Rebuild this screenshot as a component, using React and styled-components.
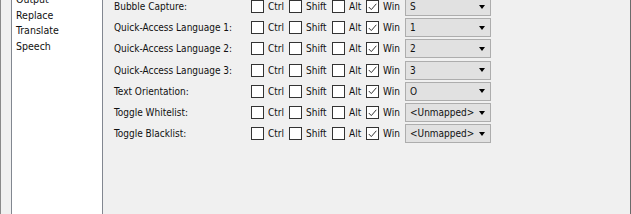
import React from 'react';
import styled, { createGlobalStyle } from 'styled-components';

const GlobalStyle = createGlobalStyle`
  html, body {
    margin: 0;
    padding: 0;
    background: #f0f0f0;
  }
  * {
    box-sizing: border-box;
  }
`;

const Window = styled.div`
  display: flex;
  width: 631px;
  height: 214px;
  overflow: hidden;
  background: #f0f0f0;
  border-left: 1px solid #8a8a8a;
  border-right: 1px solid #6b6b6b;
  font-family: 'DejaVu Sans Condensed', 'DejaVu Sans', sans-serif;
  font-size: 10px;
  color: #111;
`;

const Sidebar = styled.ul`
  list-style: none;
  margin: -9px 0 -20px 10px;
  padding: 0 0 0 4px;
  width: 92px;
  flex-shrink: 0;
  background: #fff;
  border: 1px solid #828790;
  font-size: 10.5px;
`;

const NavItem = styled.li`
  line-height: 15.5px;
  white-space: nowrap;
`;

const Content = styled.div`
  display: flex;
  flex-direction: column;
  margin-top: -4px;
  padding-left: 11px;
`;

const Row = styled.div`
  display: flex;
  align-items: center;
  height: 21.2px;
`;

const Label = styled.div`
  width: 137px;
  white-space: nowrap;
`;

const Modifier = styled.label`
  display: flex;
  align-items: center;
  gap: 4px;
  width: ${p => p.$w}px;
  white-space: nowrap;
`;

const Box = styled.span`
  display: inline-flex;
  align-items: center;
  justify-content: center;
  width: 13px;
  height: 13px;
  background: #fff;
  border: 1px solid #333;
`;

const Select = styled.div`
  display: flex;
  align-items: center;
  justify-content: space-between;
  width: 86px;
  height: 19px;
  padding: 0 4px 0 4px;
  background: #e1e1e1;
  border: 1px solid #adadad;
`;

const Arrow = styled.span`
  width: 0;
  height: 0;
  border-left: 3.5px solid transparent;
  border-right: 3.5px solid transparent;
  border-top: 4px solid #000;
  margin-right: 1px;
`;

const Check = ({ on }) => (
  <Box>
    {on && (
      <svg width="9" height="8" viewBox="0 0 9 8">
        <path d="M0.8 4 L3.3 6.6 L8.3 0.8" fill="none" stroke="#333" strokeWidth="1" />
      </svg>
    )}
  </Box>
);

const rows = [
  ['Bubble Capture:', 'S'],
  ['Quick-Access Language 1:', '1'],
  ['Quick-Access Language 2:', '2'],
  ['Quick-Access Language 3:', '3'],
  ['Text Orientation:', 'O'],
  ['Toggle Whitelist:', '<Unmapped>'],
  ['Toggle Blacklist:', '<Unmapped>'],
];

const mods = [
  ['Ctrl', 38, false],
  ['Shift', 43, false],
  ['Alt', 34, false],
  ['Win', 39, true],
];

export default function App() {
  return (
    <>
      <GlobalStyle />
      <Window>
        <Sidebar>
          {['Output', 'Replace', 'Translate', 'Speech'].map(n => (
            <NavItem key={n}>{n}</NavItem>
          ))}
        </Sidebar>
        <Content>
          {rows.map(([label, key]) => (
            <Row key={label}>
              <Label>{label}</Label>
              {mods.map(([m, w, on]) => (
                <Modifier key={m} $w={w}>
                  <Check on={on} />
                  {m}
                </Modifier>
              ))}
              <Select>
                <span>{key}</span>
                <Arrow />
              </Select>
            </Row>
          ))}
        </Content>
      </Window>
    </>
  );
}
